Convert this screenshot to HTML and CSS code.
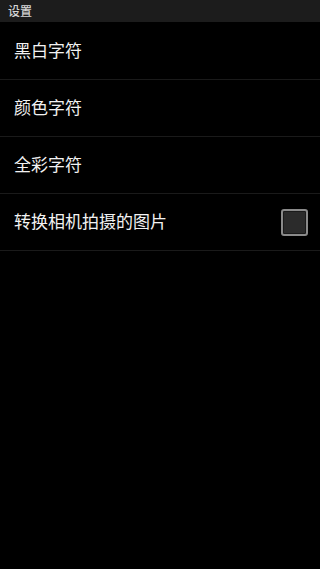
FILE: index.html
```html
<!DOCTYPE html>
<html lang="zh">
<head>
<meta charset="utf-8">
<meta name="viewport" content="width=device-width, initial-scale=1">
<title>设置</title>
<link rel="stylesheet" href="styles.css">
</head>
<body>
<header class="titlebar">设置</header>
<ul class="list">
  <li class="row"><span class="label">黑白字符</span></li>
  <li class="row"><span class="label">颜色字符</span></li>
  <li class="row"><span class="label">全彩字符</span></li>
  <li class="row"><span class="label">转换相机拍摄的图片</span><span class="checkbox"></span></li>
</ul>
</body>
</html>
```
FILE: styles.css
```css
html, body {
  margin: 0;
  padding: 0;
  background: #000;
  height: 100%;
}
body {
  font-family: "Noto Sans CJK SC", "Noto Sans", sans-serif;
  color: #f0f0f0;
}
.titlebar {
  height: 22px;
  background: #1c1c1c;
  color: #d4d4d4;
  font-size: 12px;
  font-weight: 500;
  line-height: 22px;
  padding-left: 8px;
}
.list {
  list-style: none;
  margin: 0;
  padding: 1px 0 0 0;
}
.row {
  height: 56px;
  border-bottom: 1px solid #1a1a1a;
  display: flex;
  align-items: center;
  justify-content: space-between;
  padding: 0 12px 0 14px;
}
.label {
  font-size: 17px;
  line-height: 20px;
  color: #f2f2f2;
  margin-top: -2px;
}
.checkbox {
  width: 23px;
  height: 23px;
  border: 2px solid #8a8a8a;
  border-radius: 3px;
  background: #2b2b2b;
  box-shadow: inset 0 0 0 1px #1a1a1a;
}
```
